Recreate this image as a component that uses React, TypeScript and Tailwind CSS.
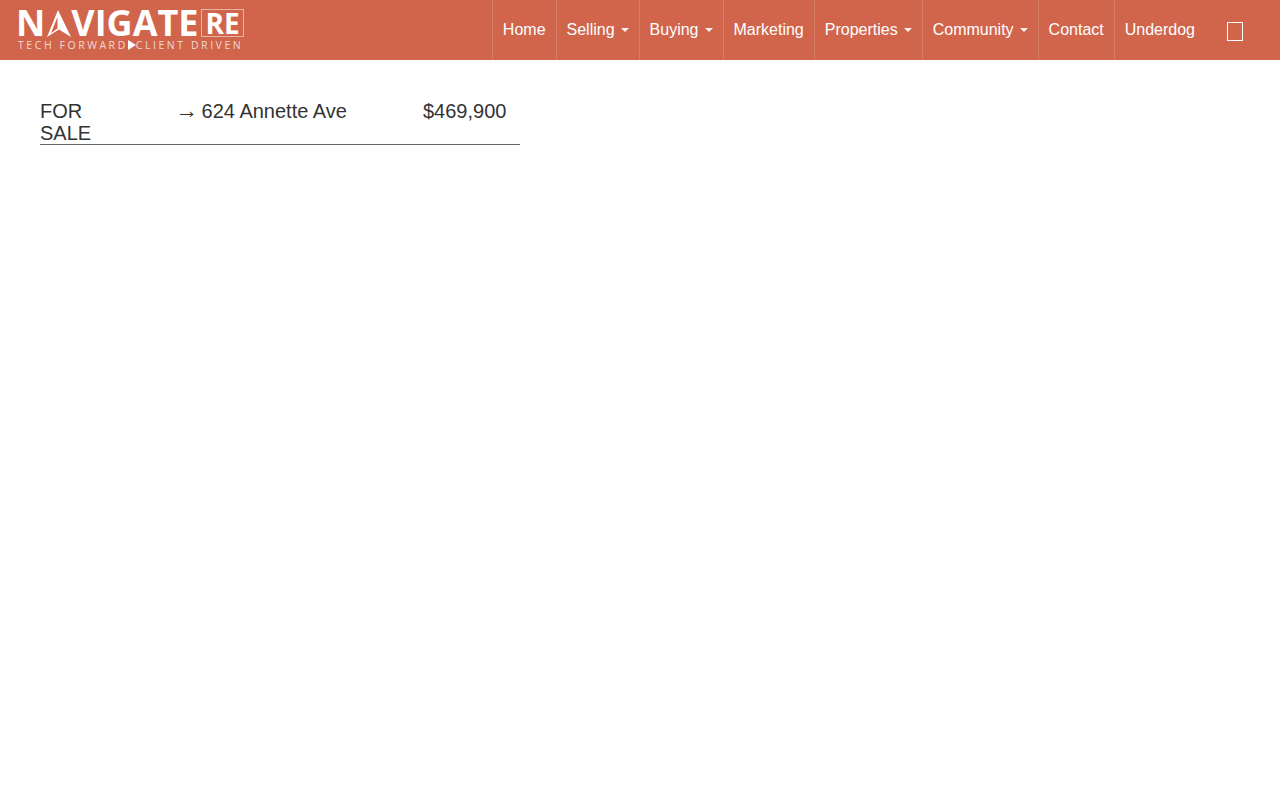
const navItems = [
  { label: "Home" },
  { label: "Selling", caret: true },
  { label: "Buying", caret: true },
  { label: "Marketing" },
  { label: "Properties", caret: true },
  { label: "Community", caret: true },
  { label: "Contact" },
  { label: "Underdog" },
];

function Logo() {
  return (
    <div className="flex flex-col w-[226px] ml-[18px] font-['Open_Sans',sans-serif] text-white">
      <div className="flex items-center h-[28px]">
        <span className="ml-[-2px] text-[36px] leading-[28px] font-bold">N</span>
        <svg width="26" height="27" viewBox="0 0 26 27" className="shrink-0">
          <path d="M13 0 L26 27 L14 19.5 L2 27 Z M12.5 7 L6 23 L12.5 18.5 Z" fill="#fff" fillRule="evenodd" />
        </svg>
        <span className="text-[36px] leading-[28px] font-bold">VIGATE</span>
        <span className="ml-auto flex items-center justify-center w-[43px] h-[28px] border border-white/50 text-[28px] leading-[26px] font-bold">
          RE
        </span>
      </div>
      <div className="flex items-center mt-[2px] text-[10.5px] leading-[12px] tracking-[2.55px] text-white/75 whitespace-nowrap">
        <span>TECH FORWARD</span>
        <svg width="8" height="10" viewBox="0 0 8 10" className="shrink-0">
          <path d="M0 0 L8 5 L0 10 Z" fill="#fff" />
        </svg>
        <span>CLIENT DRIVEN</span>
      </div>
    </div>
  );
}

export default function App() {
  return (
    <div className="min-h-[800px] bg-white font-['Liberation_Sans',Arial,sans-serif]">
      <nav className="flex items-center justify-between h-[60px] bg-[#d0654c]">
        <Logo />
        <div className="flex items-center h-full">
          <ul className="flex h-full">
            {navItems.map((item) => (
              <li
                key={item.label}
                className="flex items-center h-full px-[10px] border-l border-white/15 text-white text-base leading-6"
              >
                {item.label}
                {item.caret && (
                  <span className="ml-[6px] w-0 h-0 border-x-[4px] border-x-transparent border-t-[4px] border-t-white/90" />
                )}
              </li>
            ))}
          </ul>
          <div className="w-[16px] h-[19px] ml-[22px] mr-[37px] mt-[2px] border border-white" />
        </div>
      </nav>

      <main className="px-10 pt-10">
        <div className="flex w-[480px] border-b border-[#666] text-[20px] leading-[22px] text-[#333]">
          <div className="w-[136px] pr-[60px]">FOR SALE</div>
          <div className="w-[247px]">
            <span className="text-[23px] leading-[0] ml-[-1px] mr-[-2px]">→</span> 624 Annette Ave
          </div>
          <div>$469,900</div>
        </div>
      </main>
    </div>
  );
}
